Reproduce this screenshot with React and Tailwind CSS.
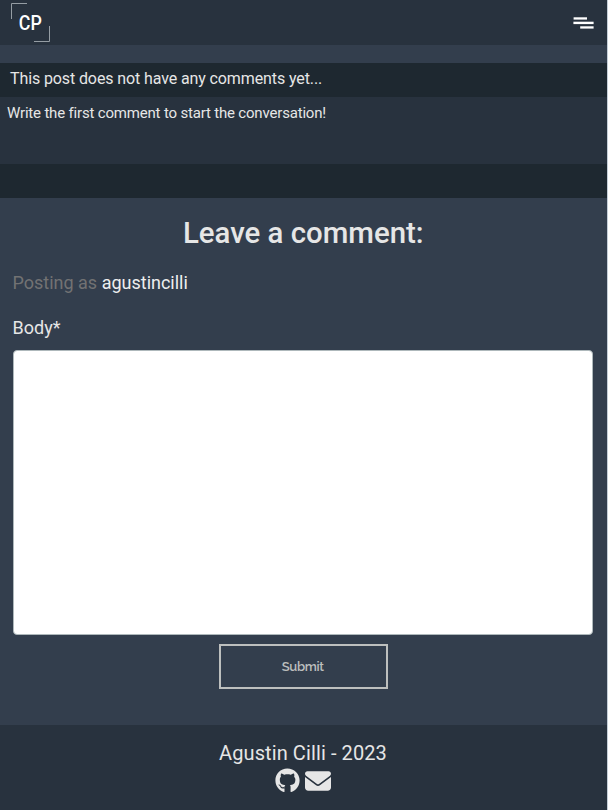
import { FaGithub, FaEnvelope } from "react-icons/fa6";

function Header() {
  return (
    <header className="flex h-[45px] items-start justify-between bg-[#28323e] pl-[11px] pr-[13px]">
      <svg className="mt-[3px] h-[39px] w-[39px]" viewBox="0 0 39 39" fill="none">
        <path d="M0.5 16V0.5H16M23 38.5H38.5V23" stroke="#959da4" strokeWidth="1" />
        <text x="7.8" y="26.6" fill="#fff" fontFamily="Roboto, sans-serif" fontSize="20" fontWeight="500" textLength="23" lengthAdjust="spacingAndGlyphs">CP</text>
      </svg>
      <button className="mt-[17px] h-3 w-[21px]" aria-label="Menu">
        <svg viewBox="0 0 21 12" className="block h-3 w-[21px]" fill="#fff">
          <rect x="0.6" y="0.3" width="13.4" height="2.3" />
          <rect x="0.4" y="4.7" width="20.2" height="2.4" />
          <rect x="7.2" y="9.3" width="13.4" height="2.3" />
        </svg>
      </button>
    </header>
  );
}

function Comments() {
  return (
    <section className="mt-[18px] bg-[#28323e]">
      <div className="h-[34px] bg-[#1e2830] pl-[10px] text-[16px] leading-[32px] tracking-[-0.11px]">
        This post does not have any comments yet...
      </div>
      <p className="h-[67px] pl-[7px] pt-1 text-[15px] leading-6 tracking-[-0.18px]">
        Write the first comment to start the conversation!
      </p>
      <div className="h-[34px] bg-[#1e2830]" />
    </section>
  );
}

function CommentForm() {
  return (
    <form className="flex h-[527px] flex-col pl-[12.5px] pr-[13px]">
      <h1 className="mt-4 text-center text-[29.4px] font-medium leading-[38px]">Leave a comment:</h1>
      <p className="mt-[17px] text-[18px] leading-[27px] text-[#727273]">
        Posting as <span className="text-[#eeeeee]">agustincilli</span>
      </p>
      <label htmlFor="body" className="mt-[18px] text-[18px] leading-[27px]">Body*</label>
      <textarea
        id="body"
        className="mt-[9px] block h-[285px] w-[580.5px] shrink-0 resize-none rounded-[4px] border border-[#aeb8bb] bg-white"
      />
      <button
        type="button"
        className="mt-[9px] h-[45px] w-[169px] self-center border-2 border-[#bdbfbe] pr-[1px] font-['Raleway','Open_Sans',sans-serif] text-[13px] font-semibold tracking-[-0.3px] text-[#bdbfbe]"
      >
        Submit
      </button>
    </form>
  );
}

function Footer() {
  return (
    <footer className="flex h-[85px] flex-col items-center bg-[#28323e] pr-[1px] pt-[13px]">
      <p className="text-[20px] leading-[30px] tracking-[0.1px]">Agustin Cilli - 2023</p>
      <div className="flex gap-[5px] pr-[1px]">
        <FaGithub className="h-[25px] w-[25px]" />
        <FaEnvelope className="h-[26px] w-[26px]" />
      </div>
    </footer>
  );
}

export default function App() {
  return (
    <div className="h-[810px] w-[608px] overflow-hidden border-r border-[#c4ced7] bg-[#333e4d] font-['Roboto',sans-serif] text-[#e6e6e6]">
      <Header />
      <Comments />
      <CommentForm />
      <Footer />
    </div>
  );
}
